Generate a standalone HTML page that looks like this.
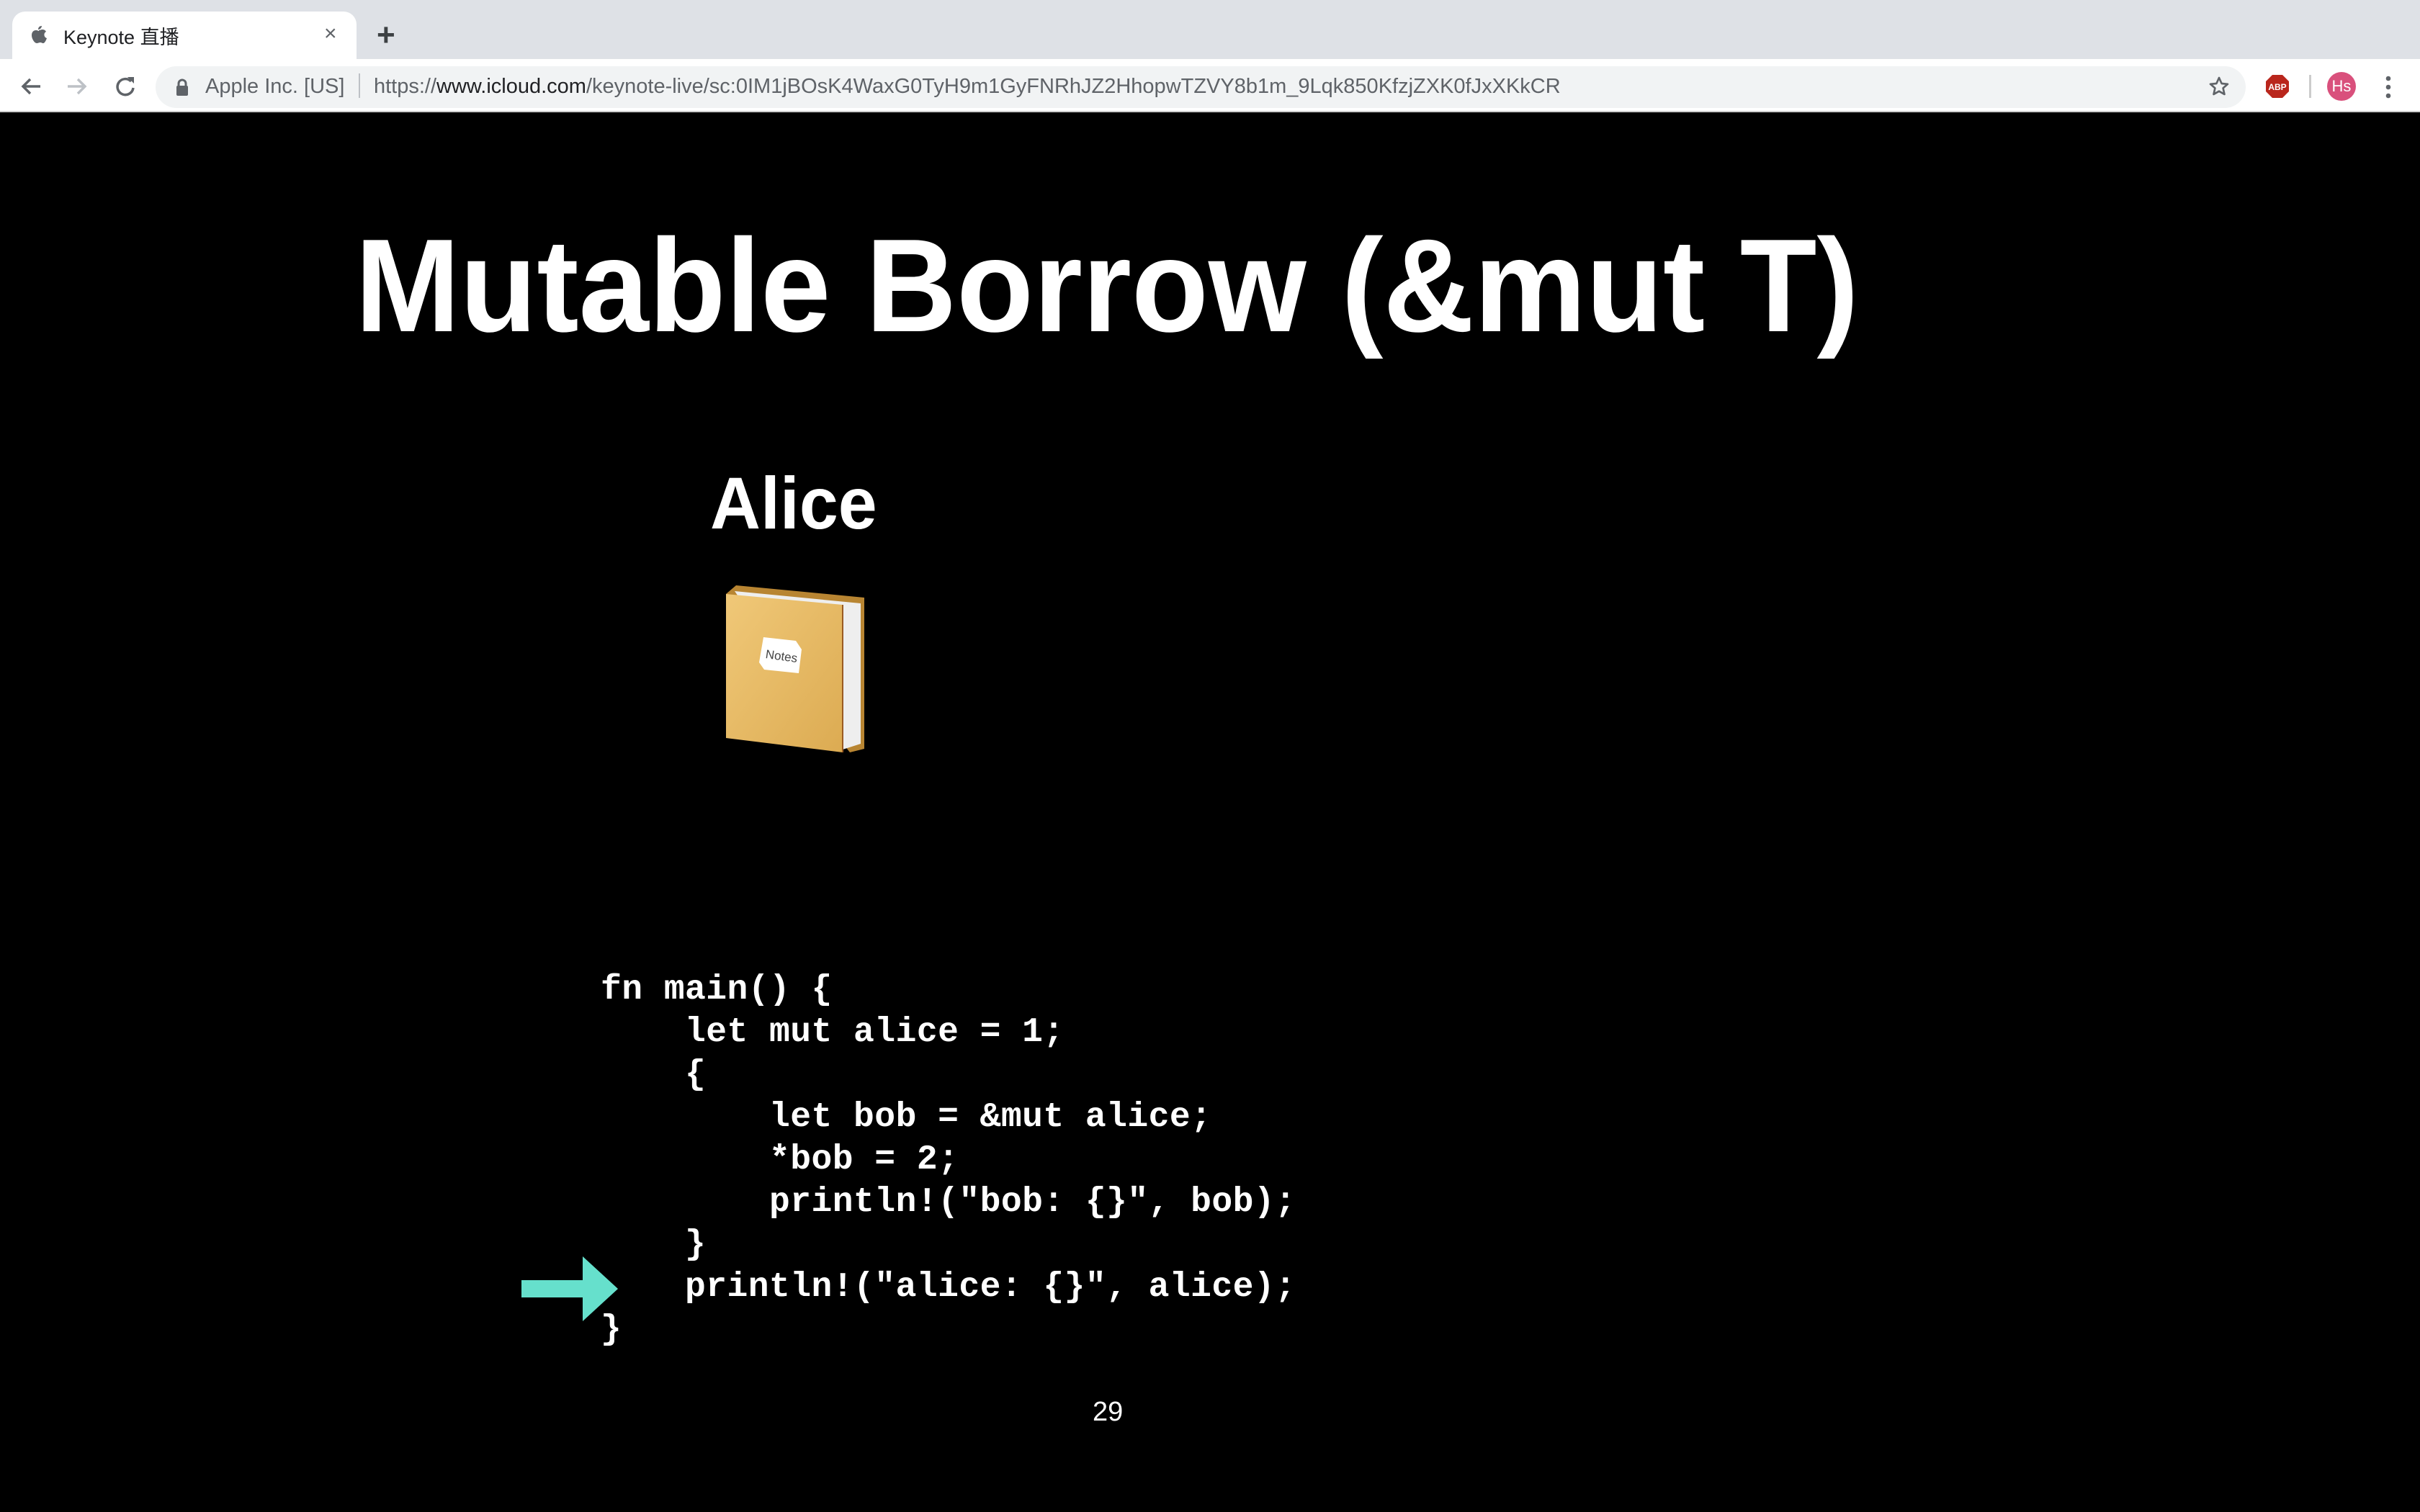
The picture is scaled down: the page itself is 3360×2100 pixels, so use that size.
<!DOCTYPE html>
<html><head><meta charset="utf-8">
<style>
*{margin:0;padding:0;box-sizing:border-box}
html,body{width:3360px;height:2100px;overflow:hidden;background:#000;font-family:"Liberation Sans","Noto Sans CJK SC",sans-serif}
#tabbar{position:absolute;left:0;top:0;width:3360px;height:82px;background:#dee1e6}
#tab{position:absolute;left:17px;top:16px;width:478px;height:68px;background:#fff;border-radius:18px 18px 0 0}
#toolbar{position:absolute;left:0;top:82px;width:3360px;height:74px;background:#fff;border-bottom:2px solid #ccc}
#omni{position:absolute;left:216px;top:92px;width:2902px;height:58px;background:#f1f3f4;border-radius:29px}
.t{position:absolute;white-space:pre}
#slide{position:absolute;left:0;top:157px;width:3360px;height:1943px;background:#000}
.code{position:absolute;left:834px;top:1346px;font-family:"Liberation Mono",monospace;font-weight:bold;font-size:48px;line-height:59px;letter-spacing:0.45px;color:#fff;white-space:pre}
</style></head><body>
<div id="tabbar"></div>
<div id="tab"></div>
<svg class="t" style="left:42px;top:34px" width="24" height="28" viewBox="0 0 24 28"><path d="M16 2c0 2-2 5-5 5 0-3 2-5 5-5zM12 8c2 0 3-1 5-1 2 0 4 1 5 3-4 2-3 8 1 9-1 3-3 7-5 7-2 0-2-1-4-1s-3 1-5 1C6 26 2 20 2 15c0-5 3-7 6-7 2 0 3 1 4 1z" fill="#5f6368"/></svg>
<div class="t" style="left:88px;top:30px;font-size:27px;color:#202124">Keynote 直播</div>
<div class="t" style="left:450px;top:30px;font-size:30px;color:#5f6368">×</div>
<div class="t" style="left:523px;top:24px;font-size:44px;color:#3c4043;font-weight:bold">+</div>
<div id="toolbar"></div>
<svg class="t" style="left:26px;top:102px" width="180" height="36" viewBox="0 0 180 36">
<path d="M30 18H6M16 8L6 18l10 10" stroke="#5f6368" stroke-width="3.5" fill="none"/>
<path d="M68 18h24M82 8l10 10-10 10" stroke="#bdc1c6" stroke-width="3.5" fill="none"/>
<path d="M156 11a11 11 0 1 0 3 9" stroke="#5f6368" stroke-width="3.5" fill="none"/><path d="M151 5h9v9z" fill="#5f6368"/>
</svg>
<div id="omni"></div>
<svg class="t" style="left:243px;top:108px" width="20" height="26" viewBox="0 0 20 26"><rect x="2" y="11" width="16" height="14" rx="2" fill="#5f6368"/><path d="M5 12V8a5 5 0 0 1 10 0v4" stroke="#5f6368" stroke-width="3" fill="none"/></svg>
<div class="t" style="left:285px;top:104px;font-size:29px;color:#5f6368">Apple Inc. [US]</div>
<div class="t" style="left:498px;top:102px;width:2px;height:34px;background:#bdc1c6"></div>
<div class="t" style="left:519px;top:104px;font-size:29px;color:#5f6368">https://<span style="color:#202124">www.icloud.com</span>/keynote-live/sc:0IM1jBOsK4WaxG0TyH9m1GyFNRhJZ2HhopwTZVY8b1m_9Lqk850KfzjZXK0fJxXKkCR</div>
<svg class="t" style="left:3065px;top:104px" width="32" height="32" viewBox="0 0 24 24"><path d="M12 3l2.7 6 6.3.6-4.8 4.2 1.4 6.4L12 17l-5.6 3.2 1.4-6.4L3 9.6 9.3 9z" stroke="#5f6368" stroke-width="2" fill="none" stroke-linejoin="round"/></svg>
<svg class="t" style="left:3145px;top:103px" width="34" height="34" viewBox="0 0 34 34"><path d="M10 1h14l9 9v14l-9 9H10l-9-9V10z" fill="#b9261c"/><text x="17" y="22" font-size="12" font-weight="bold" fill="#fff" text-anchor="middle" font-family="Liberation Sans">ABP</text></svg>
<div class="t" style="left:3206px;top:104px;width:3px;height:32px;background:#ccc"></div>
<div class="t" style="left:3231px;top:100px;width:40px;height:40px;border-radius:50%;background:#d9507c;color:#fff;font-size:22px;line-height:40px;text-align:center">Hs</div>
<svg class="t" style="left:3309px;top:104px" width="14" height="34" viewBox="0 0 14 34"><circle cx="7" cy="5" r="3.3" fill="#5f6368"/><circle cx="7" cy="17" r="3.3" fill="#5f6368"/><circle cx="7" cy="29" r="3.3" fill="#5f6368"/></svg>
<div id="slide"></div>
<div class="t" style="left:493px;top:290px;font-size:184px;font-weight:bold;color:#fff;transform:scaleX(0.95);transform-origin:0 0">Mutable Borrow (&amp;mut T)</div>
<div class="t" style="left:986px;top:641px;font-size:102px;font-weight:bold;color:#fff;transform:scaleX(0.95);transform-origin:0 0">Alice</div>
<svg class="t" style="left:1000px;top:805px" width="210" height="245" viewBox="0 0 210 245">
<defs><linearGradient id="g" x1="0" y1="0" x2="1" y2="1"><stop offset="0" stop-color="#f0c878"/><stop offset="1" stop-color="#dcab52"/></linearGradient></defs>
<path d="M8 20L22 8 200 25 200 235 180 240z" fill="#b88532"/>
<path d="M20 16L195 33 195 228 170 236z" fill="#eee"/>
<path d="M8 20L170 35 170 240 8 220z" fill="url(#g)"/>
<path d="M170 35v205" stroke="#9a5b22" stroke-width="2"/>
<path d="M60 80l45 5 8 12-4 33-48-5-7-10z" fill="#fff"/>
<text x="85" y="112" font-size="17" fill="#444" text-anchor="middle" font-family="Liberation Sans" transform="rotate(8 85 107)">Notes</text>
</svg>
<div class="code">fn main() {
    let mut alice = 1;
    {
        let bob = &amp;mut alice;
        *bob = 2;
        println!("bob: {}", bob);
    }
    println!("alice: {}", alice);
}</div>
<svg class="t" style="left:724px;top:1745px" width="134" height="90" viewBox="0 0 134 90"><path d="M0 33H85V0L134 45 85 90V57H0z" fill="#66e0cc"/></svg>
<div class="t" style="left:1517px;top:1940px;font-size:38px;color:#fff">29</div>
</body></html>
